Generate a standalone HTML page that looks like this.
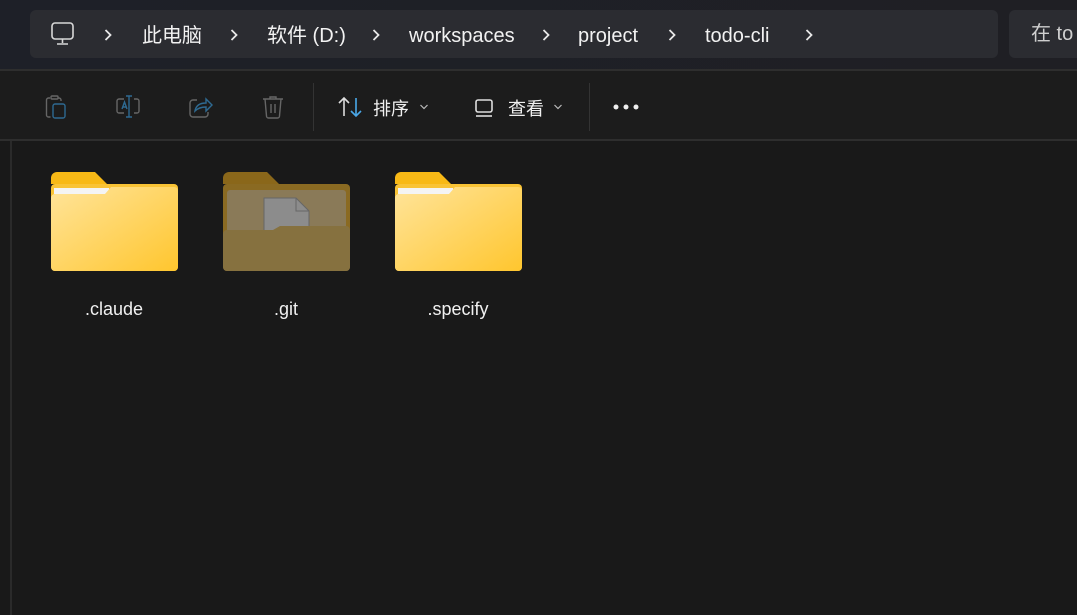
<!DOCTYPE html>
<html><head><meta charset="utf-8"><style>
*{margin:0;padding:0;box-sizing:border-box}
body{width:1077px;height:615px;overflow:hidden;background:#191919;font-family:"Liberation Sans","Noto Sans CJK SC",sans-serif;color:#fff;position:relative}
.top{position:absolute;left:0;top:0;width:1077px;height:69px;background:linear-gradient(90deg,#1e2028,#1f1f24)}
.crumb{position:absolute;left:30px;top:10px;width:968px;height:48px;background:#2b2c31;border-radius:6px}
.search{position:absolute;left:1009px;top:10px;width:100px;height:48px;background:#2b2c31;border-radius:6px;font-size:20px;line-height:48px;padding-left:22px;color:#cfcfcf}
.t{position:absolute;top:24px;height:24px;line-height:24px;font-size:20px;color:#f2f2f2;white-space:nowrap}
.ch{position:absolute;top:28px}
.ln1{position:absolute;left:0;top:69px;width:1077px;height:2px;background:#2e2e2e}
.tb{position:absolute;left:0;top:71px;width:1077px;height:69px;background:#1c1c1c}
.ln2{position:absolute;left:0;top:139px;width:1077px;height:2px;background:#2e2e2e}
.vl{position:absolute;left:10px;top:141px;width:2px;height:474px;background:#2a2a2a}
.sep{position:absolute;top:83px;width:1px;height:48px;background:#333}
.lab{position:absolute;top:298px;height:22px;line-height:22px;font-size:18px;color:#f0f0f0;text-align:center;width:126px}
.tx{position:absolute;top:98px;height:22px;line-height:22px;font-size:18px;color:#f0f0f0}
.dn{position:absolute;top:104px}
</style></head><body>
<div class="top"></div>
<div class="crumb"></div>
<div class="search">在 to</div>
<svg style="position:absolute;left:50px;top:21px" width="26" height="26" viewBox="0 0 26 26" fill="none" stroke="#d8d8d8" stroke-width="1.6"><rect x="2" y="2" width="21" height="16" rx="3"/><path d="M12.5 18v4M7 23h11"/></svg>
<svg class="ch" style="left:103px" width="10" height="14" viewBox="0 0 10 14" fill="none" stroke="#e8e8e8" stroke-width="1.8"><path d="M2.5 2l5 5-5 5"/></svg>
<div class="t" style="left:142px">此电脑</div>
<svg class="ch" style="left:229px" width="10" height="14" viewBox="0 0 10 14" fill="none" stroke="#e8e8e8" stroke-width="1.8"><path d="M2.5 2l5 5-5 5"/></svg>
<div class="t" style="left:267px">软件 (D:)</div>
<svg class="ch" style="left:371px" width="10" height="14" viewBox="0 0 10 14" fill="none" stroke="#e8e8e8" stroke-width="1.8"><path d="M2.5 2l5 5-5 5"/></svg>
<div class="t" style="left:409px">workspaces</div>
<svg class="ch" style="left:541px" width="10" height="14" viewBox="0 0 10 14" fill="none" stroke="#e8e8e8" stroke-width="1.8"><path d="M2.5 2l5 5-5 5"/></svg>
<div class="t" style="left:578px">project</div>
<svg class="ch" style="left:667px" width="10" height="14" viewBox="0 0 10 14" fill="none" stroke="#e8e8e8" stroke-width="1.8"><path d="M2.5 2l5 5-5 5"/></svg>
<div class="t" style="left:705px">todo-cli</div>
<svg class="ch" style="left:804px" width="10" height="14" viewBox="0 0 10 14" fill="none" stroke="#e8e8e8" stroke-width="1.8"><path d="M2.5 2l5 5-5 5"/></svg>
<div class="ln1"></div>
<div class="tb"></div>
<div class="ln2"></div>
<div class="vl"></div>
<svg style="position:absolute;left:44px;top:94px" width="26" height="26" viewBox="0 0 26 26" fill="none" stroke-width="1.4"><path d="M6 4h-1.5a2 2 0 0 0-2 2v15a2 2 0 0 0 2 2h2" stroke="#666"/><rect x="7" y="2" width="7" height="3" rx="1" stroke="#666"/><path d="M14 4h1a2 2 0 0 1 2 2v1" stroke="#666"/><rect x="9" y="10" width="12" height="14" rx="2" stroke="#2e6a92"/></svg>
<svg style="position:absolute;left:114px;top:94px" width="30" height="26" viewBox="0 0 30 26" fill="none" stroke-width="1.4"><path d="M10 5H5a2 2 0 0 0-2 2v10a2 2 0 0 0 2 2h5M20 5h3a2 2 0 0 1 2 2v10a2 2 0 0 1-2 2h-3" stroke="#666"/><path d="M15 2v21M12 2h6M12 23h6M8 15l2.5-7 2.5 7M9 13h3" stroke="#2e6a92"/></svg>
<svg style="position:absolute;left:187px;top:94px" width="28" height="26" viewBox="0 0 28 26" fill="none" stroke-width="1.4"><path d="M10 6H6a3 3 0 0 0-3 3v11a3 3 0 0 0 3 3h12a3 3 0 0 0 3-3v-2" stroke="#666"/><path d="M8 17c1-6 5-8 11-8V5l6 6-6 6v-4c-5 0-8 1-11 4z" stroke="#2e6a92"/></svg>
<svg style="position:absolute;left:260px;top:94px" width="26" height="26" viewBox="0 0 26 26" fill="none" stroke="#666" stroke-width="1.4"><path d="M3 5h20M10 5V3h6v2M5 5l1.5 17a2 2 0 0 0 2 2h9a2 2 0 0 0 2-2L21 5M11 10v9M15 10v9"/></svg>
<div class="sep" style="left:313px"></div>
<svg style="position:absolute;left:338px;top:96px" width="26" height="22" viewBox="0 0 26 22" fill="none" stroke-width="1.6"><path d="M6 20V2M1 7l5-5 5 5" stroke="#ddd"/><path d="M18 2v18M13 15l5 5 5-5" stroke="#4aa8e8"/></svg>
<div class="tx" style="left:373px">排序</div>
<svg class="dn" style="left:419px" width="10" height="6" viewBox="0 0 10 6" fill="none" stroke="#bbb" stroke-width="1.2"><path d="M1.5 1l3.5 3.5 3.5-3.5"/></svg>
<svg style="position:absolute;left:474px;top:98px" width="22" height="20" viewBox="0 0 22 20" fill="none" stroke="#ddd" stroke-width="1.6"><rect x="2" y="2" width="16" height="12" rx="2"/><path d="M2 18h16"/></svg>
<div class="tx" style="left:508px">查看</div>
<svg class="dn" style="left:553px" width="10" height="6" viewBox="0 0 10 6" fill="none" stroke="#bbb" stroke-width="1.2"><path d="M1.5 1l3.5 3.5 3.5-3.5"/></svg>
<div class="sep" style="left:589px"></div>
<svg style="position:absolute;left:612px;top:103px" width="28" height="8"><circle cx="4" cy="4" r="2.5" fill="#eee"/><circle cx="14" cy="4" r="2.5" fill="#eee"/><circle cx="24" cy="4" r="2.5" fill="#eee"/></svg>

<svg style="position:absolute;left:51px;top:172px" width="127" height="100" viewBox="0 0 127 100">
<defs><linearGradient id="g" x1="0" y1="0" x2="1" y2="1"><stop offset="0" stop-color="#ffe49a"/><stop offset="1" stop-color="#ffc62e"/></linearGradient></defs>
<path d="M0 6a6 6 0 0 1 6-6h38l12 12h-56z" fill="#f8b916"/><rect x="0" y="12" width="127" height="87" rx="4" fill="#f9c335"/>
<path d="M3 16h55v6H3z" fill="#f4f4f4"/><path d="M0 26a4 4 0 0 1 4-4h50l6-7h63a4 4 0 0 1 4 4v76a4 4 0 0 1-4 4H4a4 4 0 0 1-4-4z" fill="url(#g)"/></svg>
<svg style="position:absolute;left:223px;top:172px" width="127" height="100" viewBox="0 0 127 100">
<path d="M0 6a6 6 0 0 1 6-6h38l12 12h-56z" fill="#8a671a"/><rect x="0" y="12" width="127" height="87" rx="4" fill="#8a6a22"/>
<rect x="4" y="18" width="119" height="60" rx="3" fill="#8a7a58"/>
<path d="M41 26h32l13 13v40H41z" fill="#8c8c8c" stroke="#666"/><path d="M73 26v13h13" fill="none" stroke="#666"/>
<path d="M0 62a4 4 0 0 1 4-4h46l7-4h66a4 4 0 0 1 4 4v37a4 4 0 0 1-4 4H4a4 4 0 0 1-4-4z" fill="#86713f"/></svg>
<svg style="position:absolute;left:395px;top:172px" width="127" height="100" viewBox="0 0 127 100">
<path d="M0 6a6 6 0 0 1 6-6h38l12 12h-56z" fill="#f8b916"/><rect x="0" y="12" width="127" height="87" rx="4" fill="#f9c335"/>
<path d="M3 16h55v6H3z" fill="#f4f4f4"/><path d="M0 26a4 4 0 0 1 4-4h50l6-7h63a4 4 0 0 1 4 4v76a4 4 0 0 1-4 4H4a4 4 0 0 1-4-4z" fill="url(#g)"/></svg>
<div class="lab" style="left:51px">.claude</div>
<div class="lab" style="left:223px">.git</div>
<div class="lab" style="left:395px">.specify</div>
</body></html>
